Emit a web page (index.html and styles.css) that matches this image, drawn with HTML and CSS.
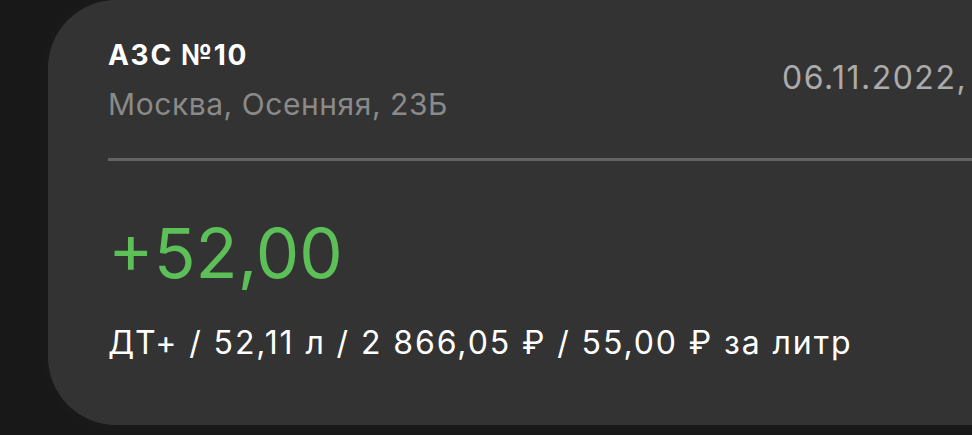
FILE: index.html
```html
<!DOCTYPE html>
<html lang="ru">
<head>
<meta charset="UTF-8" />
<meta name="viewport" content="width=device-width, initial-scale=1.0">
<title>Операция – АЗС №10</title>
<link rel="stylesheet" href="styles.css">
</head>
<body>
<section class="card">
  <header class="card-head">
    <div class="station">
      <h1 class="station-name">АЗС №10</h1>
      <p class="station-addr">Москва, Осенняя, 23Б</p>
    </div>
    <time class="op-date">06.11.2022,</time>
  </header>
  <hr class="divider">
  <div class="amount">+52,00</div>
  <p class="details">ДТ+ / 52,11 л / 2 866,05 ₽ / 55,00 ₽ за литр</p>
</section>
</body>
</html>
```

FILE: styles.css
```css
:root{
  --bg:#181818;
  --card:#333333;
  --line:#636363;
  --muted:#8a8a8a;
  --date:#ababab;
  --green:#5cbf58;
}
*,*::before,*::after{box-sizing:border-box;margin:0;padding:0}
body{
  background:var(--bg);
  font-family:Inter,'Noto Sans',sans-serif;
  color:#fff;
  overflow:hidden;
  height:435px;
}

/* КАРТОЧКА */
.card{
  margin-left:48px;
  width:1100px;
  height:425px;
  padding:38px 0 0 60px;
  background:var(--card);
  border-radius:68px;
  box-shadow:0 0 36px rgba(255,255,255,.025);
  overflow:hidden;
}

/* ШАПКА */
.card-head{display:flex;align-items:flex-start}
.station{flex:0 0 674px}
.station-name{font-size:28px;line-height:34px;font-weight:700;letter-spacing:1.7px}
.station-addr{margin-top:14px;font-size:30px;line-height:36px;color:var(--muted);letter-spacing:.55px}
.op-date{margin-top:21px;font-size:32px;line-height:38px;color:var(--date);white-space:nowrap;letter-spacing:1.5px}

.divider{
  margin-top:36px;
  height:3px;border:0;
  background:var(--line);
}

/* СУММА */
.amount{margin-top:52px;font-size:69px;line-height:80px;color:var(--green)}
.details{margin-top:31px;font-size:32px;line-height:38px;white-space:nowrap;letter-spacing:1.9px}
```
